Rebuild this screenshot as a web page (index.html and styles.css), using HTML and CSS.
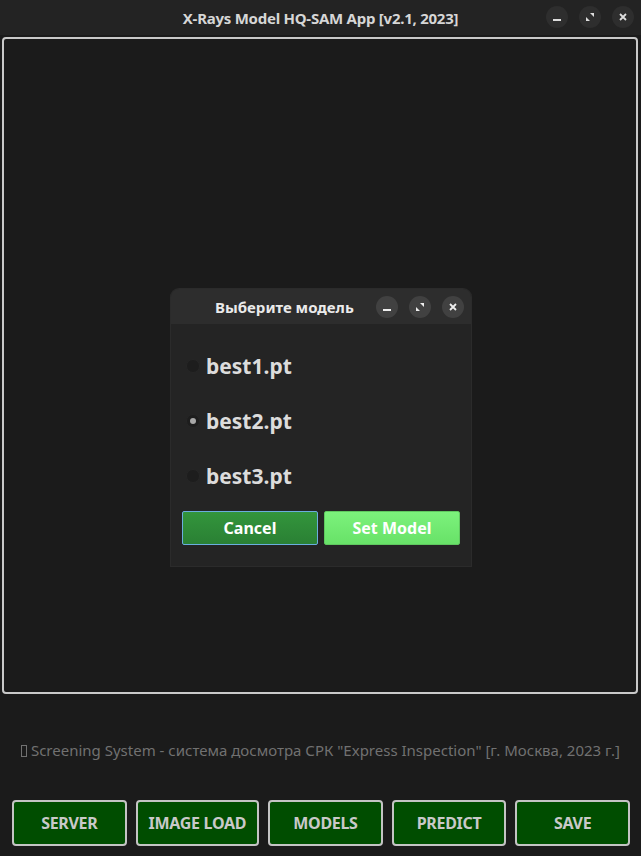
FILE: index.html
```html
<!DOCTYPE html>
<html>
<head>
<meta charset="utf-8">
<link rel="stylesheet" href="styles.css">
</head>
<body>
<div class="window">
  <header class="titlebar">
    <div class="title">X-Rays Model HQ-SAM App [v2.1, 2023]</div>
    <div class="wbtns">
      <span class="wbtn"><svg width="10" height="10" viewBox="0 0 10 10"><rect x="1" y="7" width="8" height="2" fill="#ddd"/></svg></span>
      <span class="wbtn"><svg width="10" height="10" viewBox="0 0 10 10"><path d="M5 1h4v4zM1 5v4h4z" fill="#ddd"/></svg></span>
      <span class="wbtn"><svg width="10" height="10" viewBox="0 0 10 10"><path d="M2 2l6 6M8 2l-6 6" stroke="#ddd" stroke-width="1.8"/></svg></span>
    </div>
  </header>
  <main class="canvas">
    <div class="dialog">
      <div class="dhead">
        <div class="dtitle">Выберите модель</div>
        <div class="wbtns dbtns">
          <span class="wbtn"><svg width="10" height="10" viewBox="0 0 10 10"><rect x="1" y="7" width="8" height="2" fill="#eee"/></svg></span>
          <span class="wbtn"><svg width="10" height="10" viewBox="0 0 10 10"><path d="M5 1h4v4zM1 5v4h4z" fill="#eee"/></svg></span>
          <span class="wbtn"><svg width="10" height="10" viewBox="0 0 10 10"><path d="M2 2l6 6M8 2l-6 6" stroke="#eee" stroke-width="1.8"/></svg></span>
        </div>
      </div>
      <div class="dbody">
        <label class="opt"><span class="radio"></span>best1.pt</label>
        <label class="opt"><span class="radio on"></span>best2.pt</label>
        <label class="opt"><span class="radio"></span>best3.pt</label>
        <div class="dactions">
          <button class="btn cancel">Cancel</button>
          <button class="btn setm">Set Model</button>
        </div>
      </div>
    </div>
  </main>
  <div class="status"><span class="tofu"></span> Screening System - система досмотра СРК "Express Inspection" [г. Москва, 2023 г.]</div>
  <nav class="toolbar">
    <button class="tbtn">SERVER</button>
    <button class="tbtn">IMAGE LOAD</button>
    <button class="tbtn">MODELS</button>
    <button class="tbtn">PREDICT</button>
    <button class="tbtn">SAVE</button>
  </nav>
</div>
</body>
</html>
```
FILE: styles.css
```css
* { box-sizing: border-box; }
html, body { margin: 0; padding: 0; }
body {
  width: 641px; height: 856px; overflow: hidden;
  background: #1b1b1b;
  font-family: "Noto Sans", "DejaVu Sans", sans-serif;
}
.window { display: flex; flex-direction: column; height: 856px; }
.titlebar {
  height: 35px; background: #232323;
  display: flex; align-items: center; justify-content: center; position: relative;
}
.title { color: #d6d6d6; font-weight: 700; font-size: 15px; letter-spacing: -0.25px; }
.wbtns { position: absolute; right: 7px; top: 6px; display: flex; gap: 11px; }
.wbtn {
  width: 22px; height: 22px; border-radius: 50%; background: #2e2e2e;
  display: flex; align-items: center; justify-content: center;
}
.canvas {
  margin: 2px 3px 0 2px; height: 657px;
  border: 2px solid #c9c9c9; border-radius: 4px;
  background: #1b1b1b;
  display: flex; align-items: flex-start; justify-content: center;
  padding-top: 250px;
}
.dialog {
  width: 300px; height: 277px; margin-left: 2px;
  background: #242424; border-radius: 8px 8px 0 0; overflow: hidden;
  box-shadow: 0 0 0 1px #2b2b2b;
}
.dhead {
  height: 35px; background: #2d2d2d; position: relative;
  display: flex; align-items: center; padding-left: 44px;
}
.dtitle { color: #eaeaea; font-weight: 700; font-size: 15px; }
.dbtns { top: 7px; right: 7px; gap: 11px; }
.dbtns .wbtn { background: #414141; }
.dbody { padding: 14px 11px 0 11px; }
.opt {
  display: flex; align-items: center; height: 55px;
  color: #dcdcdc; font-weight: 700; font-size: 21px; gap: 6px; padding-left: 4px;
}
.radio { width: 14px; height: 14px; border-radius: 50%; background: #1d1d1d; border: 1px solid #262626; position: relative; }
.radio.on::after { content: ""; position: absolute; left: 3px; top: 3px; width: 6px; height: 6px; border-radius: 50%; background: #a8a8a8; }
.dactions { display: flex; gap: 6px; margin-top: 8px; }
.btn {
  width: 136px; height: 34px; font-family: inherit; font-weight: 700; font-size: 16px;
  color: #fff; border-radius: 2px;
}
.cancel { background: linear-gradient(#33953c, #2a8034); border: 1px solid #6aaede; }
.setm { background: linear-gradient(#7cf27c, #68e268); border: 1px solid #5fc85f; }
.status {
  text-align: center; color: #717171; font-size: 15px; margin-top: 46px; height: 22px;
  letter-spacing: 0;
}
.tofu { display: inline-block; width: 6px; height: 12px; border: 1px solid #717171; vertical-align: -1px; }
.toolbar { display: flex; gap: 9px; padding: 0 11px 0 12px; margin-top: 38px; }
.tbtn {
  flex: 1; height: 46px; background: #004d00; border: 2px solid #c4c4c4; border-radius: 4px;
  color: #c9c9c9; font-family: inherit; font-weight: 700; font-size: 16px; letter-spacing: -0.3px;
}
.tbtn:nth-child(2) { flex: 1.09; }
```
